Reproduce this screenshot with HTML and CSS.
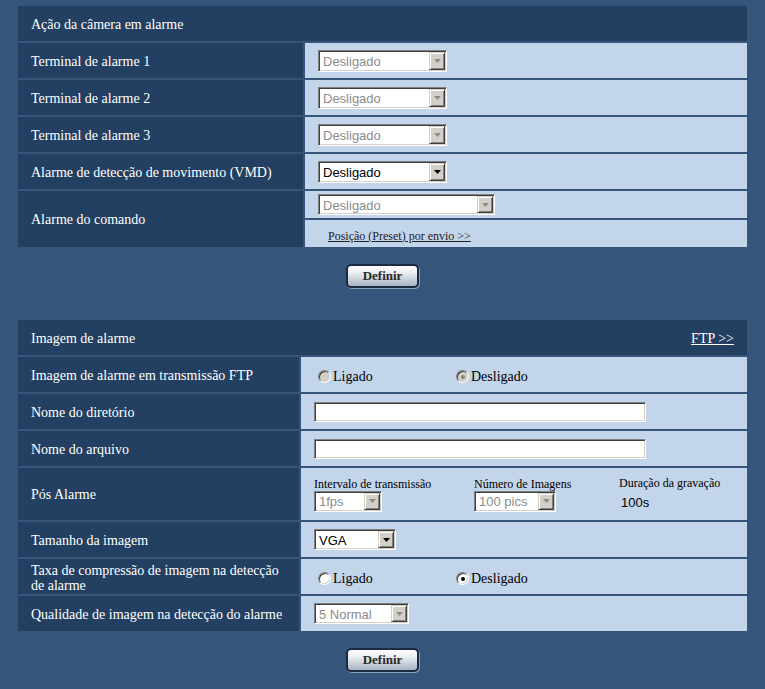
FILE: index.html
```html
<!DOCTYPE html>
<html lang="pt">
<head>
<meta charset="utf-8">
<title>Alarme</title>
<link rel="stylesheet" href="styles.css">
</head>
<body>
<div class="page">
  <section class="panel panel-a">
    <div class="head head-a"><span>Ação da câmera em alarme</span></div>

    <div class="label">Terminal de alarme 1</div>
    <div class="value">
      <span class="select disabled h22 w129"><span class="select-text">Desligado</span><span class="select-btn"><svg width="7" height="4" viewBox="0 0 7 4"><path d="M0 0h7L3.5 4z"/></svg></span></span>
    </div>

    <div class="label">Terminal de alarme 2</div>
    <div class="value">
      <span class="select disabled h22 w129"><span class="select-text">Desligado</span><span class="select-btn"><svg width="7" height="4" viewBox="0 0 7 4"><path d="M0 0h7L3.5 4z"/></svg></span></span>
    </div>

    <div class="label">Terminal de alarme 3</div>
    <div class="value">
      <span class="select disabled h22 w129"><span class="select-text">Desligado</span><span class="select-btn"><svg width="7" height="4" viewBox="0 0 7 4"><path d="M0 0h7L3.5 4z"/></svg></span></span>
    </div>

    <div class="label">Alarme de detecção de movimento (VMD)</div>
    <div class="value">
      <span class="select h22 w129"><span class="select-text">Desligado</span><span class="select-btn"><svg width="7" height="4" viewBox="0 0 7 4"><path d="M0 0h7L3.5 4z"/></svg></span></span>
    </div>

    <div class="label span2">Alarme do comando</div>
    <div class="value sub">
      <span class="select disabled w177"><span class="select-text">Desligado</span><span class="select-btn"><svg width="7" height="4" viewBox="0 0 7 4"><path d="M0 0h7L3.5 4z"/></svg></span></span>
    </div>
    <div class="value sub link-cell">
      <a class="small-link" href="#">Posição (Preset) por envio &gt;&gt;</a>
    </div>
  </section>

  <div class="actions actions-a"><button class="btn" type="button">Definir</button></div>

  <section class="panel panel-b">
    <div class="head"><span>Imagem de alarme</span><a class="head-link" href="#">FTP &gt;&gt;</a></div>

    <div class="label">Imagem de alarme em transmissão FTP</div>
    <div class="value">
      <label class="radio-opt"><span class="radio disabled"></span>Ligado</label>
      <label class="radio-opt"><span class="radio disabled checked"></span>Desligado</label>
    </div>

    <div class="label">Nome do diretório</div>
    <div class="value"><span class="text-input"></span></div>

    <div class="label">Nome do arquivo</div>
    <div class="value"><span class="text-input"></span></div>

    <div class="label">Pós Alarme</div>
    <div class="value multi">
      <div class="col col-1">
        <div class="sub-label">Intervalo de transmissão</div>
        <span class="select disabled w68"><span class="select-text">1fps</span><span class="select-btn"><svg width="7" height="4" viewBox="0 0 7 4"><path d="M0 0h7L3.5 4z"/></svg></span></span>
      </div>
      <div class="col col-2">
        <div class="sub-label">Número de Imagens</div>
        <span class="select disabled w82"><span class="select-text">100 pics</span><span class="select-btn"><svg width="7" height="4" viewBox="0 0 7 4"><path d="M0 0h7L3.5 4z"/></svg></span></span>
      </div>
      <div class="col">
        <div class="sub-label">Duração da gravação</div>
        <div class="plain-value">100s</div>
      </div>
    </div>

    <div class="label">Tamanho da imagem</div>
    <div class="value">
      <span class="select w82"><span class="select-text">VGA</span><span class="select-btn"><svg width="7" height="4" viewBox="0 0 7 4"><path d="M0 0h7L3.5 4z"/></svg></span></span>
    </div>

    <div class="label wrap">Taxa de compressão de imagem na detecção de alarme</div>
    <div class="value">
      <label class="radio-opt"><span class="radio"></span>Ligado</label>
      <label class="radio-opt"><span class="radio checked"></span>Desligado</label>
    </div>

    <div class="label">Qualidade de imagem na detecção do alarme</div>
    <div class="value">
      <span class="select disabled w95"><span class="select-text">5 Normal</span><span class="select-btn"><svg width="7" height="4" viewBox="0 0 7 4"><path d="M0 0h7L3.5 4z"/></svg></span></span>
    </div>
  </section>

  <div class="actions actions-b"><button class="btn" type="button">Definir</button></div>
</div>
</body>
</html>
```

FILE: styles.css
```css
html, body {
  margin: 0;
  padding: 0;
}

body {
  background: #36557a;
  font-family: "Liberation Serif", "Times New Roman", serif;
  font-size: 14px;
  color: #000;
}

.page {
  padding: 6px 18px 18px 18px;
}

.panel {
  display: grid;
  gap: 2px;
}

.panel-a {
  grid-template-columns: 285px 1fr;
}

.panel-b {
  grid-template-columns: 281px 1fr;
}

.head {
  grid-column: 1 / -1;
  height: 35px;
  box-sizing: border-box;
  padding: 2px 13px 0;
  background: #233f61;
  color: #fff;
  display: flex;
  align-items: center;
  justify-content: space-between;
}

.head-a {
  padding-top: 3px;
}

.head-link {
  color: #fff;
  text-decoration: underline;
}

.label {
  background: #233f61;
  color: #fff;
  min-height: 35px;
  box-sizing: border-box;
  padding: 2px 13px 0;
  display: flex;
  align-items: center;
}

.label.span2 {
  grid-row: span 2;
}

.label.wrap {
  line-height: 15px;
}

.value {
  background: #c3d5ea;
  height: 35px;
  box-sizing: border-box;
  padding-left: 13px;
  display: flex;
  align-items: center;
}

.value.sub {
  height: 27px;
}

.value.link-cell {
  padding-left: 23px;
  padding-top: 5px;
}

.value.multi {
  height: 52px;
  align-items: center;
}

.small-link {
  font-size: 12px;
  color: #222;
  text-decoration: underline;
}

/* classic select */
.select {
  display: inline-flex;
  align-items: stretch;
  height: 21px;
  box-sizing: border-box;
  background: #fff;
  border: 1px solid;
  border-color: #808080 #fff #fff #808080;
  box-shadow: inset 1px 1px 0 #404040, inset -1px -1px 0 #d4d0c8;
  padding: 1px;
  font-family: "Liberation Sans", Arial, sans-serif;
  font-size: 13px;
  color: #000;
}

.select.h22 {
  height: 22px;
}

.select.w129 { width: 129px; }
.select.w177 { width: 177px; }
.select.w68 { width: 68px; }
.select.w82 { width: 82px; }
.select.w95 { width: 95px; }

.select-text {
  flex: 1;
  display: flex;
  align-items: center;
  padding: 1px 0 0 3px;
  overflow: hidden;
  white-space: nowrap;
}

.select-btn {
  width: 16px;
  box-sizing: border-box;
  background: #d4d0c8;
  border: 1px solid;
  border-color: #d4d0c8 #404040 #404040 #d4d0c8;
  box-shadow: inset 1px 1px 0 #fff, inset -1px -1px 0 #808080;
  display: flex;
  align-items: center;
  justify-content: center;
}

.select-btn svg {
  display: block;
  fill: #000;
}

.select.disabled .select-text {
  color: #8c8c8c;
}

.select.disabled .select-btn svg {
  fill: #8c8c8c;
}

/* text input */
.text-input {
  display: block;
  width: 332px;
  height: 20px;
  box-sizing: border-box;
  background: #fff;
  border: 1px solid;
  border-color: #808080 #fff #fff #808080;
  box-shadow: inset 1px 1px 0 #404040, inset -1px -1px 0 #d4d0c8;
}

/* radios */
.radio-opt {
  display: inline-flex;
  align-items: center;
  width: 138px;
  flex: none;
  padding-top: 4px;
}

.radio-opt + .radio-opt {
  width: auto;
}

.radio {
  display: inline-block;
  width: 13px;
  height: 13px;
  box-sizing: border-box;
  margin: 0 2px 0 4px;
  border-radius: 50%;
  border: 1px solid;
  border-color: #808080 #fff #fff #808080;
  box-shadow: inset 1px 1px 0 #404040, inset -1px -1px 0 #d4d0c8;
  background: #fff;
  position: relative;
}

.radio.disabled {
  background: #d4d0c8;
}

.radio.checked::after {
  content: "";
  position: absolute;
  left: 3.5px;
  top: 3.5px;
  width: 4px;
  height: 4px;
  border-radius: 50%;
  background: #000;
}

.radio.disabled.checked::after {
  background: #808080;
}

/* pós alarme */
.col {
  display: flex;
  flex-direction: column;
  align-items: flex-start;
}

.col-1 { width: 160px; }
.col-2 { width: 145px; }

.sub-label {
  font-size: 12px;
  line-height: 14px;
}

.plain-value {
  font-family: "Liberation Sans", Arial, sans-serif;
  font-size: 13px;
  line-height: 21px;
  padding: 2px 0 0 2px;
}

/* buttons */
.actions {
  display: flex;
  justify-content: center;
}

.actions-a {
  padding: 17px 0 32px;
}

.actions-b {
  padding: 17px 0 0;
}

.btn {
  width: 73px;
  height: 24px;
  box-sizing: border-box;
  border: 2px solid #1a2a42;
  border-radius: 5px;
  background: linear-gradient(#ffffff 0%, #eef0f4 30%, #aab4c3 100%);
  box-shadow: 1px 1px 0 #8ea2b8;
  font-family: "Liberation Serif", "Times New Roman", serif;
  font-weight: bold;
  font-size: 13px;
  color: #2b2b2b;
  padding: 0;
  cursor: pointer;
}
```
